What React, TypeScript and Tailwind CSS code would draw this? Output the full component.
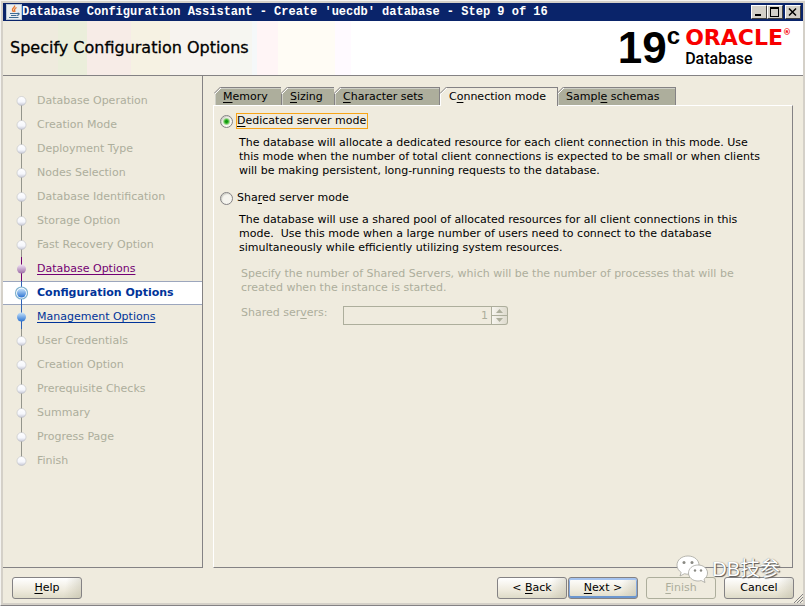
import React from 'react';

type StepState = 'idle' | 'visited' | 'current' | 'next';

const steps: { label: string; state: StepState }[] = [
  { label: 'Database Operation', state: 'idle' },
  { label: 'Creation Mode', state: 'idle' },
  { label: 'Deployment Type', state: 'idle' },
  { label: 'Nodes Selection', state: 'idle' },
  { label: 'Database Identification', state: 'idle' },
  { label: 'Storage Option', state: 'idle' },
  { label: 'Fast Recovery Option', state: 'idle' },
  { label: 'Database Options', state: 'visited' },
  { label: 'Configuration Options', state: 'current' },
  { label: 'Management Options', state: 'next' },
  { label: 'User Credentials', state: 'idle' },
  { label: 'Creation Option', state: 'idle' },
  { label: 'Prerequisite Checks', state: 'idle' },
  { label: 'Summary', state: 'idle' },
  { label: 'Progress Page', state: 'idle' },
  { label: 'Finish', state: 'idle' },
];

const tabs = [
  { label: 'Memory', mnemonic: 0, width: 'w-[67px]' },
  { label: 'Sizing', mnemonic: 0, width: 'w-[53px]' },
  { label: 'Character sets', mnemonic: 0, width: 'w-[105px]' },
  { label: 'Connection mode', mnemonic: 1, width: 'w-[118px]', selected: true },
  { label: 'Sample schemas', mnemonic: 5, width: 'w-[118px]' },
];

// Underlines the keyboard shortcut letter of a label
function Mnemonic({ text, at }: { text: string; at: number }) {
  return (
    <span className="whitespace-pre">
      {text.slice(0, at)}
      <span className="underline underline-offset-2">{text[at]}</span>
      {text.slice(at + 1)}
    </span>
  );
}

function JavaIcon() {
  return (
    <svg viewBox="0 0 16 16" className="h-4 w-4 shrink-0">
      <rect width="16" height="16" fill="#b9c8d6" />
      <rect x="1" y="1" width="14" height="14" fill="#eaeef1" />
      <path d="M8.500 1.500c1 2-2.500 2.500-2 4.500.2.800.8 1.200 1 2M10.500 3.500C8 5 8.300 6 9 8" fill="none" stroke="#e8762c" strokeWidth="1.400" />
      <path d="M4 9.500h7M5 11.500h5.500M3 13.500h9.500M11 9.500c3-.8 2.500 1.500 0 2" fill="none" stroke="#3f6c93" strokeWidth="1.200" />
    </svg>
  );
}

function WindowButton({ label, children }: { label: string; children: React.ReactNode }) {
  return (
    <button
      aria-label={label}
      className="h-[14px] w-4 border border-t-white border-l-white border-r-[#404040] border-b-[#404040] bg-[#d4d0c8]"
    >
      <svg viewBox="0 0 14 12" className="block h-3 w-[14px]" fill="none" stroke="#000" shapeRendering="crispEdges">
        {children}
      </svg>
    </button>
  );
}

function TitleBar() {
  return (
    <div className="flex h-[18px] items-center bg-[#0a246a] pr-[2px] pl-[3px]">
      <JavaIcon />
      <h1 className="flex-1 truncate font-['Liberation_Mono','Noto_Sans_CJK_SC',monospace] text-[12px] font-bold leading-[18px] text-white">
        Database Configuration Assistant - Create 'uecdb' database - Step 9 of 16
      </h1>
      <WindowButton label="Minimize">
        <path d="M3 9h6" strokeWidth="2" />
      </WindowButton>
      <WindowButton label="Maximize">
        <path d="M2 2h9" strokeWidth="2" />
        <path d="M2.500 2v8.500h8V2" />
      </WindowButton>
      <span className="w-[2px]" />
      <WindowButton label="Close">
        <path d="M3 2.500l7 7M10 2.500l-7 7" strokeWidth="1.500" shapeRendering="auto" />
      </WindowButton>
    </div>
  );
}

function Header() {
  return (
    <header className="flex h-[55px] items-center justify-between border-b border-[#848284] bg-[linear-gradient(90deg,#efebde_0_55px,#ebeedb_55px_84px,#f7ece7_84px_128px,#f6f2e3_128px_167px,#f7f3ef_167px_227px,#f6f6f1_227px_249px,#f5f8f9_249px_254px,#fff5f6_254px_275px,#fffcf5_275px_332px,#fffaff_332px_348px,#fff_348px)] pl-[7px] pr-3">
      <h2 className="text-[16px] font-normal leading-5 text-black [-webkit-text-stroke:0.300px_#000]">
        Specify Configuration Options
      </h2>
      <div className="flex items-center">
        <div className="flex items-start font-['Liberation_Sans',sans-serif] font-bold leading-none text-black">
          <span className="text-[44px] leading-[50px]">19</span>
          <span className="text-[24px] leading-[26px]">c</span>
        </div>
        <div className="flex flex-col pl-[5px]">
          <span className="flex items-start text-[22px] font-bold leading-[22px] text-[#f80000]">
            ORACLE<span className="text-[8px] leading-[12px]">®</span>
          </span>
          <span className="font-['Roboto',sans-serif] text-[16px] font-medium leading-5 text-black">Database</span>
        </div>
      </div>
    </header>
  );
}

function StepNode({ state, first, last }: { state: StepState; first: boolean; last: boolean }) {
  const line = state === 'idle' ? '#94958c' : state === 'visited' ? '#730073' : '#3163b5';
  const fill = state === 'idle' ? 'url(#idle)' : state === 'visited' ? 'url(#visited)' : 'url(#active)';
  return (
    <svg viewBox="0 0 14 24" className="h-6 w-[14px] shrink-0">
      <path d={`M7.500 ${first ? 12 : 0}V${last ? 12 : 24}`} stroke={line} />
      {state === 'current' && <circle cx="7.500" cy="12" r="6" fill="#fff" stroke="#7fb2cf" strokeWidth="1.200" />}
      <circle cx="7.500" cy="12" r="4.500" fill={fill} stroke={state === 'idle' ? '#b5b6bd' : 'none'} strokeWidth=".5" />
    </svg>
  );
}

function Sidebar() {
  return (
    <nav className="w-[200px] shrink-0 border-r border-b border-[#848284] pt-[13px]">
      <svg className="absolute h-0 w-0" aria-hidden="true">
        <defs>
          <linearGradient id="idle" x2="0" y2="1">
            <stop stopColor="#fff" />
            <stop offset=".6" stopColor="#f5f6fc" />
            <stop offset="1" stopColor="#c5c7d4" />
          </linearGradient>
          <linearGradient id="visited" x2="0" y2="1">
            <stop stopColor="#f1e3f4" />
            <stop offset="1" stopColor="#9c6ba5" />
          </linearGradient>
          <linearGradient id="active" x2="0" y2="1">
            <stop stopColor="#c9e4fb" />
            <stop offset="1" stopColor="#2b73d2" />
          </linearGradient>
        </defs>
      </svg>
      <ol>
        {steps.map((step, i) => (
          <li
            key={step.label}
            className={
              step.state === 'current'
                ? 'flex h-6 items-center bg-white pl-[11px] shadow-[inset_0_1px_#9ca6bd,inset_0_-1px_#9ca6bd]'
                : 'flex h-6 items-center pl-[11px]'
            }
          >
            <StepNode state={step.state} first={i === 0} last={i === steps.length - 1} />
            <span className="pl-[9px]">
              {step.state === 'idle' && <span className="text-[#adae9c]">{step.label}</span>}
              {step.state === 'current' && (
                <span className="font-bold text-[#003399]" aria-current="step">
                  {step.label}
                </span>
              )}
              {step.state === 'visited' && (
                <a href="#database-options" className="text-[#730073] underline underline-offset-2">
                  {step.label}
                </a>
              )}
              {step.state === 'next' && (
                <a href="#management-options" className="text-[#003399] underline underline-offset-2">
                  {step.label}
                </a>
              )}
            </span>
          </li>
        ))}
      </ol>
    </nav>
  );
}

function Tab({ label, mnemonic, width, selected }: (typeof tabs)[number]) {
  return (
    <button
      role="tab"
      aria-selected={!!selected}
      className={`relative border-t border-r border-[#848284] pl-2 text-left ${width} ${
        selected ? 'z-10 -mb-px h-[19px] border-l border-l-white bg-[#efebde]' : 'h-[18px] bg-[#adae9c] shadow-[inset_1px_1px_#cecfc6]'
      }`}
    >
      {/* cut corner */}
      <svg viewBox="0 0 7 7" className="absolute -top-px -left-px h-[7px] w-[7px]">
        <path d="M0 0h7L0 7z" fill="#efebde" />
        <path d="M0 6.500L6.500 0" stroke="#848284" fill="none" />
        <path d="M1 7L7 1" stroke="#fff" fill="none" />
      </svg>
      <Mnemonic text={label} at={mnemonic} />
    </button>
  );
}

function ModeOption({ id, label, at, checked }: { id: string; label: string; at: number; checked?: boolean }) {
  return (
    <div className="flex h-4 items-center">
      <input
        type="radio"
        id={id}
        name="mode"
        defaultChecked={checked}
        className="h-[13px] w-[13px] shrink-0 appearance-none rounded-full border border-[#848284] bg-[#f5f4ee] shadow-[inset_1px_1px_1px_#cecfc6] checked:bg-[radial-gradient(circle,#109a10_0_1px,#4cba3c_2px,#f7f5ef_4px)]"
      />
      <label
        htmlFor={id}
        className={`ml-[3px] flex h-4 items-center border pr-px ${checked ? 'border-[#f7a518]' : 'border-transparent'}`}
      >
        <Mnemonic text={label} at={at} />
      </label>
    </div>
  );
}

function ConnectionPanel() {
  return (
    <div
      role="tabpanel"
      className="flex-1 border border-t-white border-l-white border-r-[#848284] border-b-[#848284] pt-[7px] pl-[6px] leading-[14px]"
    >
      <ModeOption id="dedicated" label="Dedicated server mode" at={0} checked />
      <p className="mt-[7px] ml-[19px] max-w-[530px]">
        The database will allocate a dedicated resource for each client connection in this mode. Use this mode when the
        number of total client connections is expected to be small or when clients will be making persistent,
        long-running requests to the database.
      </p>
      <div className="mt-3">
        <ModeOption id="shared" label="Shared server mode" at={3} />
      </div>
      <p className="mt-[7px] ml-[19px] max-w-[530px]">
        The database will use a shared pool of allocated resources for all client connections in this mode.&nbsp; Use
        this mode when a large number of users need to connect to the database simultaneously while efficiently
        utilizing system resources.
      </p>
      <div className="mt-3 ml-[21px] text-[#adae9c]">
        <p className="max-w-[530px]">
          Specify the number of Shared Servers, which will be the number of processes that will be created when the
          instance is started.
        </p>
        <div className="mt-[11px] flex items-start">
          <label htmlFor="servers" className="w-[102px]">
            <Mnemonic text="Shared servers:" at={10} />
          </label>
          <input
            id="servers"
            type="text"
            defaultValue="1"
            disabled
            className="h-[19px] w-[149px] border border-[#adae9c] px-[3px] text-right text-[#adae9c]"
          />
          <div className="flex h-[19px] w-4 flex-col rounded-r-[3px] border border-l-0 border-[#adae9c] bg-linear-to-r from-[#f7f5ef] to-[#dedbce]">
            <button disabled aria-label="Increase" className="flex flex-1 items-center justify-center border-b border-[#adae9c]">
              <svg viewBox="0 0 7 4" className="h-1 w-[7px]">
                <path d="M0 4L3.500 0 7 4z" fill="#adae9c" />
              </svg>
            </button>
            <button disabled aria-label="Decrease" className="flex flex-1 items-center justify-center">
              <svg viewBox="0 0 7 4" className="h-1 w-[7px]">
                <path d="M0 0h7L3.500 4z" fill="#adae9c" />
              </svg>
            </button>
          </div>
        </div>
      </div>
    </div>
  );
}

const buttonBase = 'h-[22px] w-[70px] rounded-[3px] border text-center leading-5';
const buttonNormal =
  'border-[#848284] bg-[linear-gradient(100deg,transparent_75%,#bdbaa580),linear-gradient(#fff,#efebde_60%,#dedbc8)]';

function Footer() {
  return (
    <footer className="relative flex h-[35px] items-start px-[9px] pt-[9px]">
      <button className={`${buttonBase} ${buttonNormal}`}>
        <Mnemonic text="Help" at={0} />
      </button>
      <div className="ml-auto flex">
        <button className={`${buttonBase} ${buttonNormal}`}>
          <Mnemonic text="< Back" at={2} />
        </button>
        <button className={`${buttonBase} ${buttonNormal} ml-px shadow-[inset_0_2px_#a5c3ef,inset_0_-2px_#6b96cf,inset_1px_0_#84a9de,inset_-1px_0_#84a9de]`}>
          <Mnemonic text="Next >" at={0} />
        </button>
        <button disabled className={`${buttonBase} ml-2 border-[#adae9c] text-[#adae9c]`}>
          <Mnemonic text="Finish" at={0} />
        </button>
        <button className={`${buttonBase} ${buttonNormal} ml-2`}>Cancel</button>
      </div>

      {/* Resize grip */}
      <svg viewBox="0 0 9 9" className="absolute right-0 bottom-0 h-[9px] w-[9px]" stroke="#848284">
        <path d="M0 9L9 0M3 9l6-6M6 9l3-3" />
      </svg>

      {/* Watermark */}
      <div className="pointer-events-none absolute right-[23px] bottom-5 flex items-center gap-1">
        <svg viewBox="0 0 32 28" className="h-7 w-8" stroke="#9b9b93" strokeWidth=".7">
          <path d="M12 1C5.500 1 1 5 1 10.200c0 3 1.600 5.500 4.200 7.200L4 21l4.500-2.300c1.200.3 2.300.5 3.500.5 6.500 0 11-4 11-9S18.500 1 12 1z" fill="#fff" />
          <path d="M22 10c-5.500 0-9.500 3.600-9.500 8s4 8 9.500 8c1.200 0 2.200-.2 3.200-.5L29 27.500l-1-3.300c2.200-1.500 3.500-3.700 3.500-6.200 0-4.400-4-8-9.500-8z" fill="#fff" />
          <g fill="#8a8a84" stroke="none">
            <circle cx="8" cy="7.500" r="1.500" />
            <circle cx="16" cy="7.500" r="1.500" />
            <circle cx="19" cy="15.500" r="1.200" />
            <circle cx="25" cy="15.500" r="1.200" />
          </g>
        </svg>
        <span className="font-['Liberation_Sans','Noto_Sans_CJK_SC',sans-serif] text-[20px] leading-6 text-white [text-shadow:1px_1px_1px_#555,0_0_1px_#666]">
          DB技参
        </span>
      </div>
    </footer>
  );
}

export default function App() {
  return (
    <div className="flex min-h-screen flex-col border-t border-b border-l border-t-[#f4f3f0] border-b-[#848284] border-l-[#f4f3f0] bg-[#efebde] font-['DejaVu_Sans',sans-serif] text-[11px] leading-[14px] text-black">
      <div className="flex flex-1 flex-col border-2 border-[#d4d0c8]">
        <TitleBar />
        <Header />
        <div className="flex flex-1">
          <Sidebar />
          <main className="flex min-w-0 flex-1 flex-col px-[10px] pt-[11px]">
            <div role="tablist" className="flex pl-[2px]">
              {tabs.map((tab) => (
                <Tab key={tab.label} {...tab} />
              ))}
            </div>
            <ConnectionPanel />
          </main>
        </div>
        <Footer />
      </div>
    </div>
  );
}
